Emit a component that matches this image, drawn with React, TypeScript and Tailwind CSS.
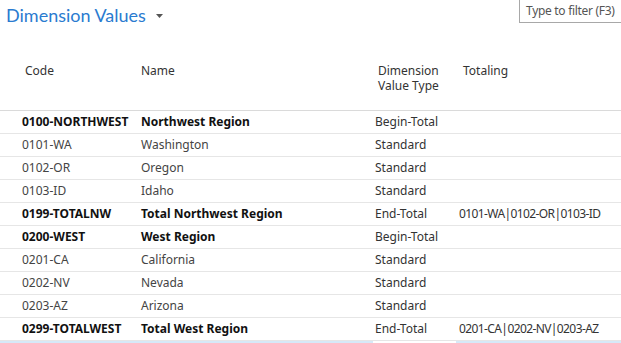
import React from "react";

const rows = [
  { code: "0100-NORTHWEST", name: "Northwest Region", type: "Begin-Total", tot: "", bold: true },
  { code: "0101-WA", name: "Washington", type: "Standard", tot: "" },
  { code: "0102-OR", name: "Oregon", type: "Standard", tot: "" },
  { code: "0103-ID", name: "Idaho", type: "Standard", tot: "" },
  { code: "0199-TOTALNW", name: "Total Northwest Region", type: "End-Total", tot: "0101-WA|0102-OR|0103-ID", bold: true },
  { code: "0200-WEST", name: "West Region", type: "Begin-Total", tot: "", bold: true },
  { code: "0201-CA", name: "California", type: "Standard", tot: "" },
  { code: "0202-NV", name: "Nevada", type: "Standard", tot: "" },
  { code: "0203-AZ", name: "Arizona", type: "Standard", tot: "" },
  { code: "0299-TOTALWEST", name: "Total West Region", type: "End-Total", tot: "0201-CA|0202-NV|0203-AZ", bold: true },
];

export default function App() {
  return (
    <div className="w-[621px] h-[343px] overflow-hidden bg-white text-[12px] text-[#333]" style={{ fontFamily: '"Noto Sans", "Open Sans", sans-serif' }}>
      <div className="flex items-start justify-between h-[63px]">
        <div className="flex items-center pl-[6px] pt-[2px]">
          <span className="text-[18px] font-normal text-[#2a7bd0] leading-[26px]" style={{ fontFamily: 'Lato, "Noto Sans", sans-serif' }}>Dimension Values</span>
          <svg width="7" height="4" viewBox="0 0 7 4" className="ml-[10px] mt-[1px]">
            <path d="M0 0 L7 0 L3.5 4 Z" fill="#555" />
          </svg>
        </div>
        <div className="w-[102px] h-[23px] border border-[#a8a8a8] border-t-0 border-r-0 pl-[6px] text-[#555] text-[12px] leading-[21px] tracking-[-0.3px] whitespace-nowrap overflow-hidden">
          Type to filter (F3)
        </div>
      </div>
      <div className="grid grid-cols-[119px_234px_84px_1fr] pl-[22px] h-[47px] leading-[15px] text-[#333]">
        <div className="pl-[3px]">Code</div>
        <div>Name</div>
        <div className="pl-[3px]">Dimension<br />Value Type</div>
        <div className="pl-[4px]">Totaling</div>
      </div>
      <div className="border-t border-[#dadada]">
        {rows.map((r, i) => (
          <div
            key={i}
            className={`grid grid-cols-[119px_234px_84px_1fr] pl-[22px] h-[23px] items-center border-b border-[#e6e6e6] ${r.bold ? "font-bold text-[#111]" : "text-[#444]"}`}
          >
            <div>{r.code}</div>
            <div>{r.name}</div>
            <div className="font-normal text-[#333]">{r.type}</div>
            <div className="font-normal text-[#333] tracking-[-0.6px]">{r.tot}</div>
          </div>
        ))}
        <div className="flex h-[4px]">
          <div className="w-[373px] bg-[#d6e9f8]" />
          <div className="w-[83px] bg-white" />
          <div className="flex-1 bg-[#d6e9f8]" />
        </div>
      </div>
    </div>
  );
}
